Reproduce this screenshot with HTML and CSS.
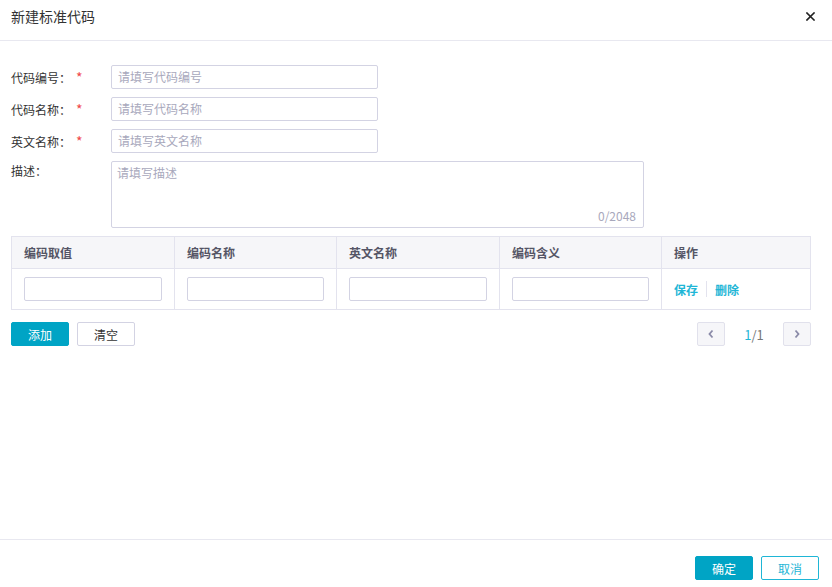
FILE: index.html
```html
<!DOCTYPE html>
<html lang="zh">
<head>
<meta charset="utf-8">
<link rel="stylesheet" href="styles.css">
</head>
<body>
<div class="dialog">
  <div class="header">
    <div class="title">新建标准代码</div>
    <div class="close">
      <svg width="9" height="9" viewBox="0 0 9 9"><path d="M1 1L8 8M8 1L1 8" stroke="#222" stroke-width="1.6" stroke-linecap="square"/></svg>
    </div>
  </div>
  <div class="body">
    <div class="row">
      <div class="label">代码编号：<span class="req">*</span></div>
      <div class="input"><span class="ph">请填写代码编号</span></div>
    </div>
    <div class="row">
      <div class="label">代码名称：<span class="req">*</span></div>
      <div class="input"><span class="ph">请填写代码名称</span></div>
    </div>
    <div class="row">
      <div class="label">英文名称：<span class="req">*</span></div>
      <div class="input"><span class="ph">请填写英文名称</span></div>
    </div>
    <div class="row">
      <div class="label top">描述：</div>
      <div class="textarea"><span class="ph">请填写描述</span><span class="count">0/2048</span></div>
    </div>
    <div class="table">
      <div class="tr thead">
        <div class="td">编码取值</div>
        <div class="td">编码名称</div>
        <div class="td">英文名称</div>
        <div class="td">编码含义</div>
        <div class="td op">操作</div>
      </div>
      <div class="tr tbody">
        <div class="td"><div class="cell-input"></div></div>
        <div class="td"><div class="cell-input"></div></div>
        <div class="td"><div class="cell-input"></div></div>
        <div class="td"><div class="cell-input"></div></div>
        <div class="td op"><span class="link">保存</span><span class="sep"></span><span class="link">删除</span></div>
      </div>
    </div>
    <div class="actions">
      <div class="btn primary">添加</div>
      <div class="btn">清空</div>
      <div class="spacer"></div>
      <div class="pager">
        <div class="pbtn"><svg width="8" height="10" viewBox="0 0 8 10"><path d="M5.5 1.5L2.5 5L5.5 8.5" fill="none" stroke="#8a8aa8" stroke-width="1.8"/></svg></div>
        <div class="pnum"><span class="cur">1</span>/1</div>
        <div class="pbtn"><svg width="8" height="10" viewBox="0 0 8 10"><path d="M2.5 1.5L5.5 5L2.5 8.5" fill="none" stroke="#8a8aa8" stroke-width="1.8"/></svg></div>
      </div>
    </div>
  </div>
  <div class="footer">
    <div class="btn primary">确定</div>
    <div class="btn outline">取消</div>
  </div>
</div>
</body>
</html>
```
FILE: styles.css
```css
* { box-sizing: border-box; }
html, body { margin: 0; padding: 0; background: #fff; }
body {
  font-family: "Noto Sans CJK SC", "Noto Sans", sans-serif;
  font-size: 12px;
  color: #333;
}
.dialog {
  width: 832px;
  height: 587px;
  display: flex;
  flex-direction: column;
}
.header {
  height: 41px;
  border-bottom: 1px solid #e8e8f0;
  display: flex;
  align-items: center;
  justify-content: space-between;
  padding: 0 17px 8px 11px;
}
.title { font-size: 14px; color: #333; line-height: 20px; }
.close { width: 9px; height: 9px; display: flex; }
.body {
  flex: 1;
  padding: 24px 11px 0 11px;
}
.row {
  display: flex;
  margin-bottom: 8px;
}
.label {
  width: 100px;
  height: 24px;
  line-height: 24px;
  color: #333;
}
.label.top { line-height: 20px; }
.req { color: #f0484a; margin-left: 5px; font-size: 14px; }
.input {
  width: 267px;
  height: 24px;
  border: 1px solid #d3d3e3;
  border-radius: 2px;
  padding: 0 6px;
  line-height: 22px;
}
.ph { color: #a8a8bc; }
.textarea {
  width: 533px;
  height: 67px;
  border: 1px solid #d3d3e3;
  border-radius: 2px;
  padding: 1px 5px;
  line-height: 20px;
  display: flex;
  flex-direction: column;
  justify-content: space-between;
}
.count { align-self: flex-end; color: #a8a8bc; padding-right: 2px; }
.table {
  width: 800px;
  border: 1px solid #e3e3ee;
  border-bottom: none;
}
.tr { display: flex; border-bottom: 1px solid #e3e3ee; }
.td {
  width: 163px;
  border-right: 1px solid #e3e3ee;
  padding: 0 12px;
  display: flex;
  align-items: center;
}
.td:nth-child(2), .td:nth-child(4) { width: 162px; }
.td.op { width: 148px; border-right: none; }
.thead { height: 32px; background: #f6f6f9; }
.thead .td { color: #555566; font-weight: bold; }
.tbody { height: 41px; }
.cell-input {
  width: 138px;
  height: 24px;
  border: 1px solid #d3d3e3;
  border-radius: 2px;
}
.link { color: #1fb6d6; font-weight: bold; }
.sep { width: 1px; height: 16px; background: #e3e3ee; margin: 0 8px; }
.actions {
  width: 800px;
  display: flex;
  align-items: center;
  margin-top: 12px;
  gap: 8px;
}
.spacer { flex: 1; }
.btn {
  width: 58px;
  height: 24px;
  border: 1px solid #d3d3e3;
  border-radius: 2px;
  display: flex;
  align-items: center;
  justify-content: center;
  color: #333;
  font-size: 12px;
}
.btn.primary { background: #00a4c5; border-color: #00a4c5; color: #fff; }
.btn.outline { border-color: #1fb6d6; color: #1fb6d6; }
.pager { display: flex; align-items: center; }
.pbtn {
  width: 28px;
  height: 24px;
  border: 1px solid #e1e1ec;
  border-radius: 2px;
  background: #f6f6f9;
  display: flex;
  align-items: center;
  justify-content: center;
}
.pnum { width: 58px; text-align: center; color: #777; font-size: 13px; }
.cur { color: #1fb6d6; }
.footer {
  height: 48px;
  border-top: 1px solid #e8e8f0;
  display: flex;
  justify-content: flex-end;
  align-items: flex-start;
  padding: 16px 13px 0 0;
  gap: 8px;
}
```
